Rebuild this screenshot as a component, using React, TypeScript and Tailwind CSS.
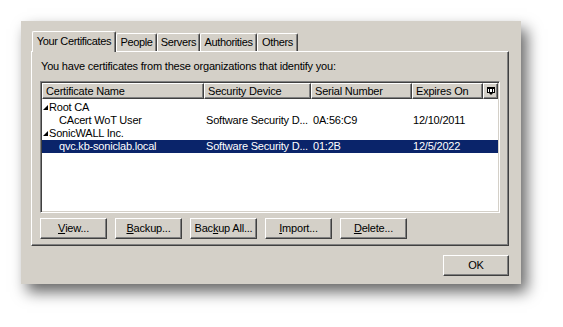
import React from "react";

const raised =
  "border border-t-white border-l-white border-r-[#404040] border-b-[#404040] shadow-[inset_-1px_-1px_0_#808080]";

function Tri({ white }: { white?: boolean }) {
  return (
    <svg width="5" height="5" viewBox="0 0 5 5" className="shrink-0">
      <path d="M5 0 L5 5 L0 5 Z" fill={white ? "#fff" : "#000"} />
    </svg>
  );
}

function Btn({ children, w = "w-[67px]" }: { children: React.ReactNode; w?: string }) {
  return (
    <div className={`${w} h-[21px] ${raised} bg-[#d4d0c8] flex items-center justify-center shrink-0`}>
      {children}
    </div>
  );
}

type Row = {
  kind: "group" | "item";
  name: string;
  dev?: string;
  serial?: string;
  exp?: string;
  sel?: boolean;
};

const rows: Row[] = [
  { kind: "group", name: "Root CA" },
  { kind: "item", name: "CAcert WoT User", dev: "Software Security D...", serial: "0A:56:C9", exp: "12/10/2011" },
  { kind: "group", name: "SonicWALL Inc." },
  { kind: "item", name: "qvc.kb-soniclab.local", dev: "Software Security D...", serial: "01:2B", exp: "12/5/2022", sel: true },
];

export default function App() {
  return (
    <div className="w-[563px] h-[327px] bg-white pt-[21px] pl-[21px] font-['Liberation_Sans',Arial,sans-serif] text-[11px] tracking-[-0.2px] text-black leading-[13px]">
      <div className="w-[500px] h-[263px] bg-[#d4d0c8] shadow-[6px_8px_14px_rgba(0,0,0,0.6)] flex flex-col">
        {/* tabs */}
        <div className="flex items-end h-[20px] mt-[10px] ml-[11px] relative z-10">
          <div className="w-[84px] h-[21px] -mb-px bg-[#d4d0c8] border-t border-l border-white border-r border-r-[#404040] shadow-[inset_-1px_0_0_#808080] rounded-t-[2px] flex items-center justify-center pb-[2px] tracking-[-0.35px]">
            Your Certificates
          </div>
          {[
            ["People", "w-[41px]"],
            ["Servers", "w-[43px]"],
            ["Authorities", "w-[57px]"],
            ["Others", "w-[41px]"],
          ].map(([t, w]) => (
            <div
              key={t}
              className={`${w} h-[18px] bg-[#d4d0c8] border-t border-l border-white border-r border-r-[#404040] shadow-[inset_-1px_0_0_#808080] rounded-t-[2px] flex items-center justify-center tracking-[-0.35px]`}
            >
              {t}
            </div>
          ))}
        </div>
        {/* panel */}
        <div className={`ml-[10px] w-[478px] h-[195px] ${raised} pl-[8px] pt-[8px] flex flex-col`}>
          <div className="h-[13px] mb-[8px] pl-px whitespace-nowrap">You have certificates from these organizations that identify you:</div>
          <div className="w-[460px] h-[132px] bg-white border border-t-[#808080] border-l-[#808080] border-r-white border-b-white shadow-[inset_1px_1px_0_#404040,inset_-1px_-1px_0_#d4d0c8] p-px flex flex-col">
            <div className="flex h-[16px] shrink-0">
              {[
                ["Certificate Name", "w-[162px]"],
                ["Security Device", "w-[107px]"],
                ["Serial Number", "w-[101px]"],
                ["Expires On", "w-[71px]"],
              ].map(([t, w]) => (
                <div key={t} className={`${w} ${raised} bg-[#d4d0c8] flex items-center pl-[3px] shrink-0 whitespace-nowrap`}>
                  {t}
                </div>
              ))}
              <div className={`w-[15px] ${raised} bg-[#d4d0c8] flex items-center justify-center shrink-0`}>
                <svg width="8" height="8" viewBox="0 0 8 8">
                  <rect x="0.5" y="0.5" width="7" height="5" fill="#fff" stroke="#000" />
                  <path d="M0 1.5 H8" stroke="#000" />
                  <path d="M2.5 2 V6 M5.5 2 V6" stroke="#000" />
                  <path d="M2 6 H6 L4 8 Z" fill="#000" />
                </svg>
              </div>
            </div>
            <div className="mt-[2px] flex flex-col">
              {rows.map((r, i) => (
                <div
                  key={i}
                  className={`flex h-[13px] items-center ${r.sel ? "bg-[#0a246a] text-white" : ""}`}
                >
                  {r.kind === "group" ? (
                    <div className="w-[162px] flex items-center pl-px gap-px shrink-0">
                      <Tri />
                      <span>{r.name}</span>
                    </div>
                  ) : (
                    <>
                      <div className="w-[162px] pl-[17px] shrink-0 whitespace-nowrap">{r.name}</div>
                      <div className="w-[107px] pl-[2px] shrink-0 whitespace-nowrap">{r.dev}</div>
                      <div className="w-[101px] pl-[2px] shrink-0">{r.serial}</div>
                      <div className="w-[71px] pl-[1px] shrink-0">{r.exp}</div>
                    </>
                  )}
                </div>
              ))}
            </div>
          </div>
          <div className="flex gap-[8px] mt-[5px]">
            <Btn>
              <span className="underline underline-offset-1">V</span>iew...
            </Btn>
            <Btn>
              <span className="underline underline-offset-1">B</span>ackup...
            </Btn>
            <Btn>
              Bac<span className="underline underline-offset-1">k</span>up All...
            </Btn>
            <Btn>
              <span className="underline underline-offset-1">I</span>mport...
            </Btn>
            <Btn>
              <span className="underline underline-offset-1">D</span>elete...
            </Btn>
          </div>
        </div>
        <div className="self-end mr-[12px] mt-[9px]">
          <Btn w="w-[66px]">OK</Btn>
        </div>
      </div>
    </div>
  );
}
